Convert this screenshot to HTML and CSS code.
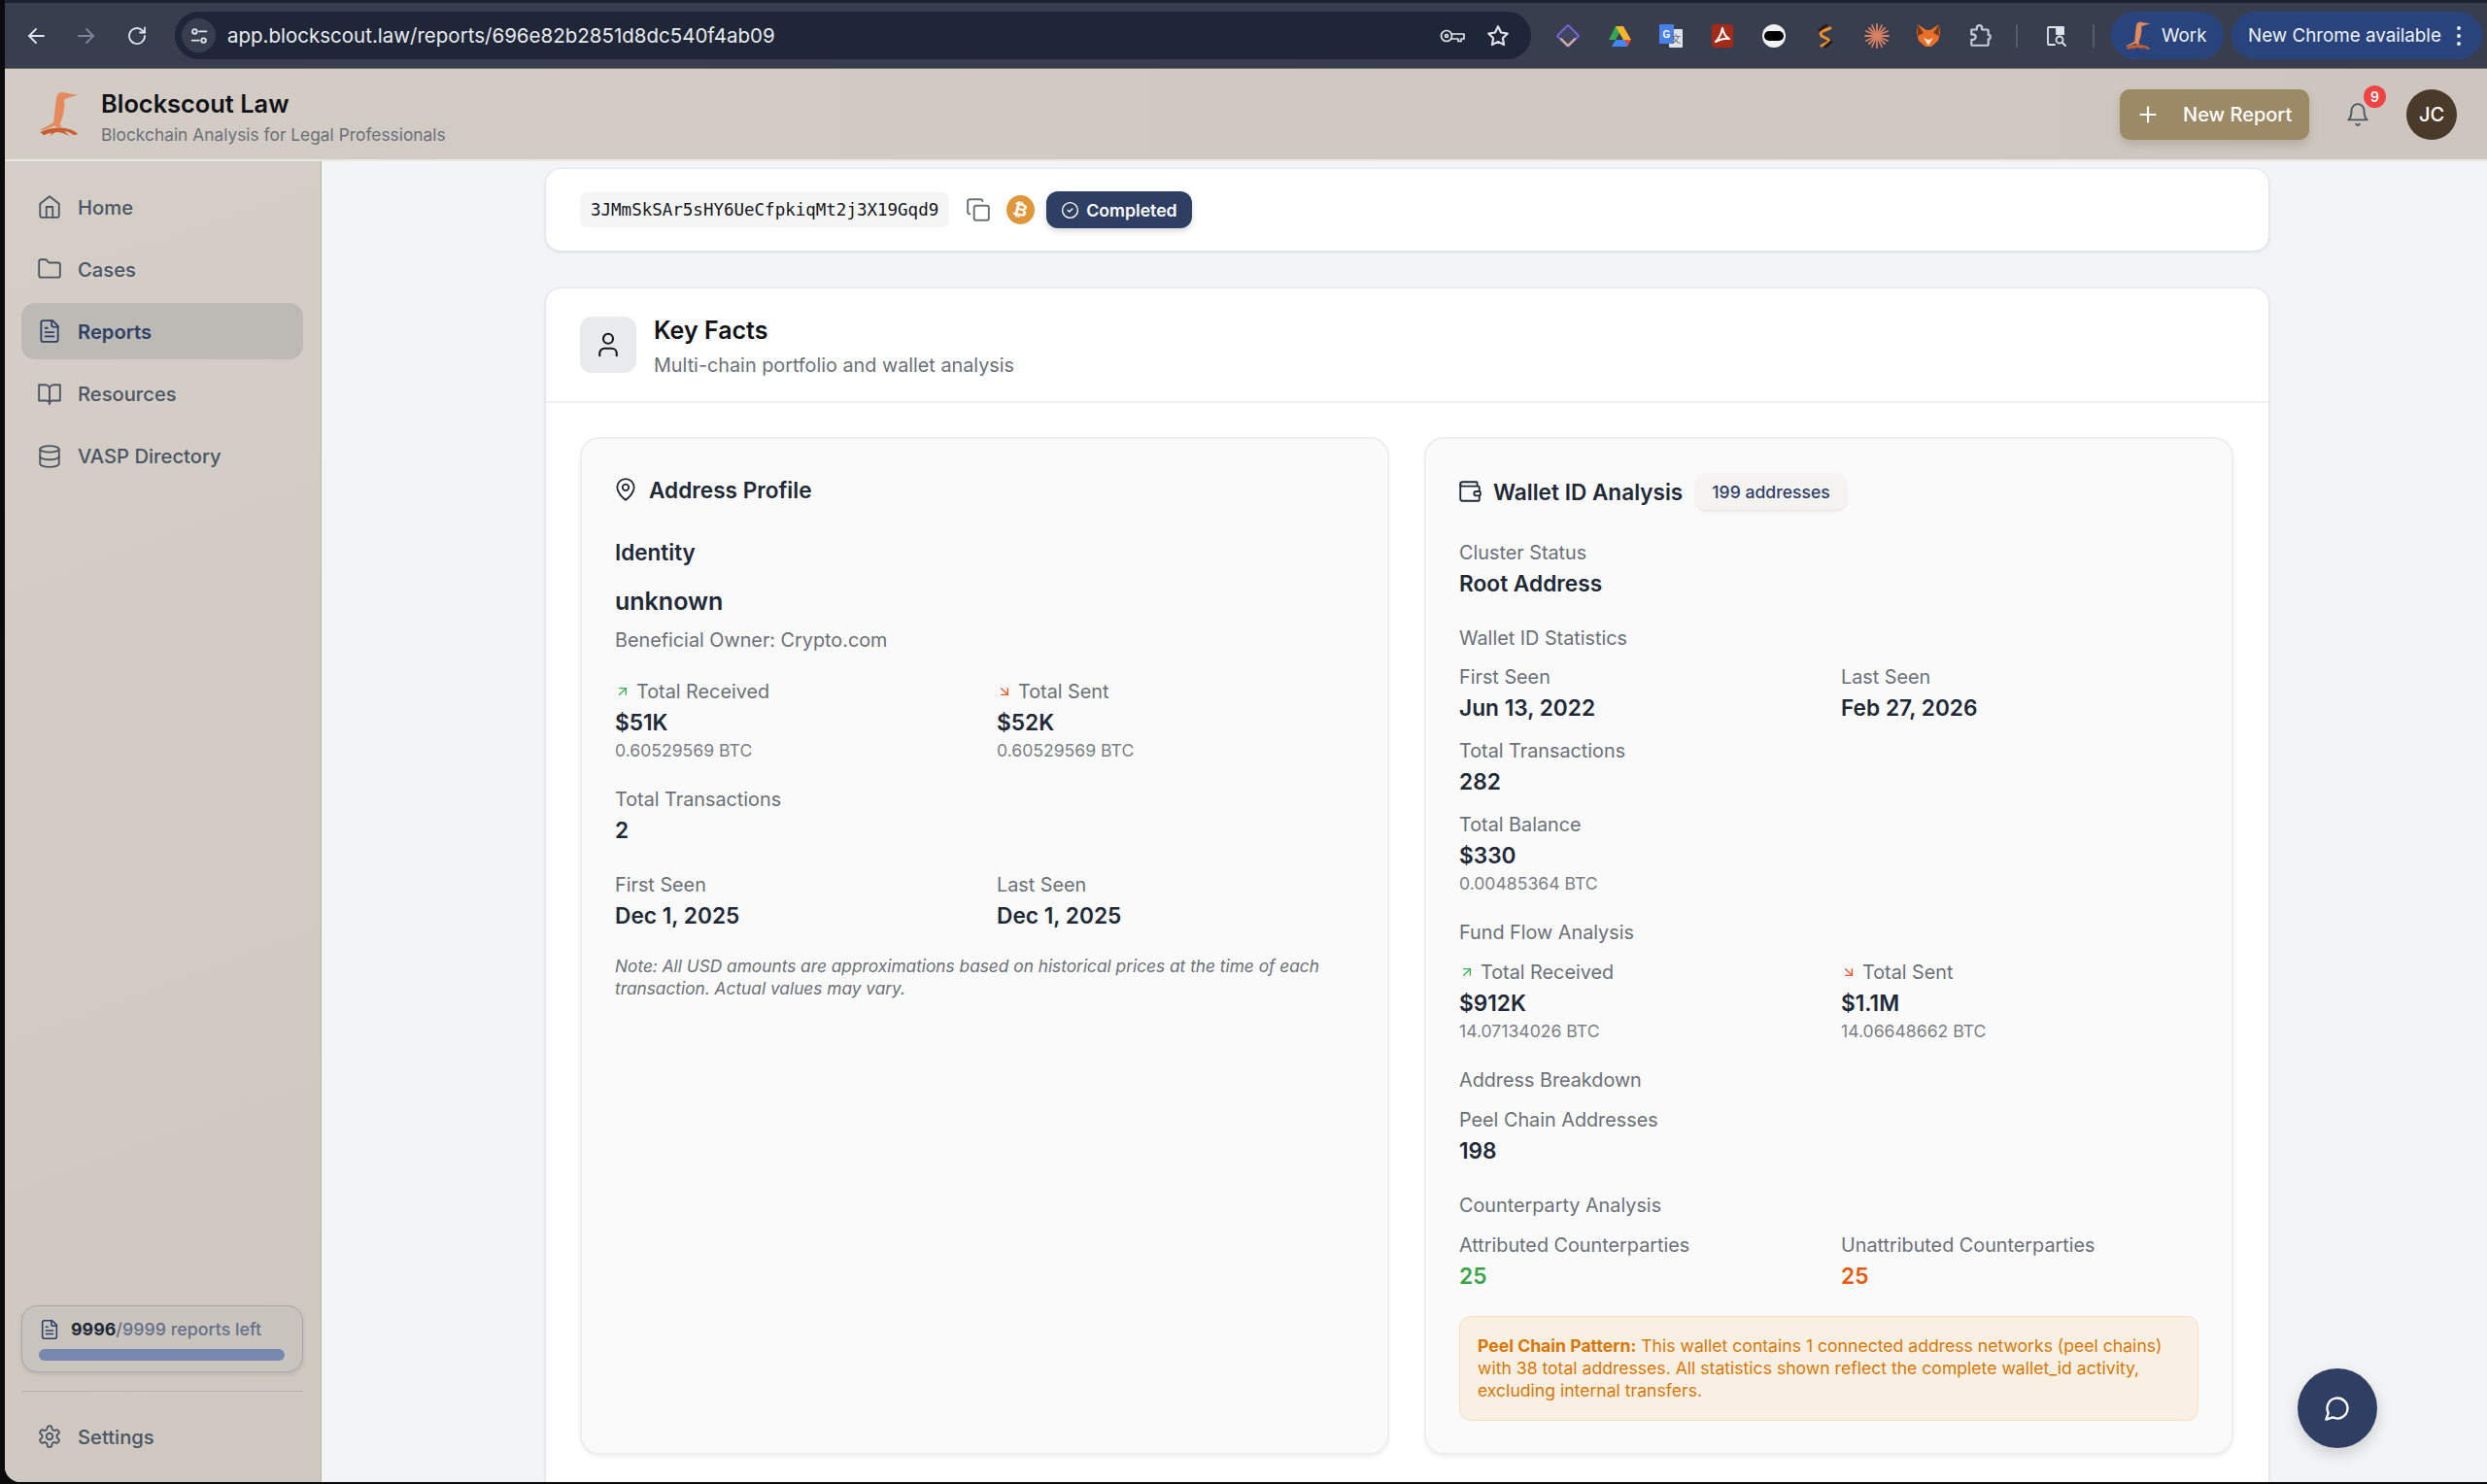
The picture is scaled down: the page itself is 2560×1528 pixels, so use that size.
FILE: index.html
```html
<!DOCTYPE html>
<html lang="en">
<head>
    <meta charset="UTF-8">
    <meta name="viewport" content="width=device-width, initial-scale=1.0">
    <title>Blockscout Law</title>
    <link rel="stylesheet" href="styles.css">
</head>
<body>
    <svg class="sprite" xmlns="http://www.w3.org/2000/svg">
        <symbol id="i-home" viewBox="0 0 24 24"><path d="m3 9 9-7 9 7v11a2 2 0 0 1-2 2H5a2 2 0 0 1-2-2z"/><path d="M9 22V12h6v10"/></symbol>
        <symbol id="i-folder" viewBox="0 0 24 24"><path d="M20 20a2 2 0 0 0 2-2V8a2 2 0 0 0-2-2h-7.9a2 2 0 0 1-1.69-.9L9.6 3.9A2 2 0 0 0 7.93 3H4a2 2 0 0 0-2 2v13a2 2 0 0 0 2 2Z"/></symbol>
        <symbol id="i-file" viewBox="0 0 24 24"><path d="M15 2H6a2 2 0 0 0-2 2v16a2 2 0 0 0 2 2h12a2 2 0 0 0 2-2V7Z"/><path d="M14 2v4a2 2 0 0 0 2 2h4"/><path d="M10 9H8"/><path d="M16 13H8"/><path d="M16 17H8"/></symbol>
        <symbol id="i-book" viewBox="0 0 24 24"><path d="M2 3h6a4 4 0 0 1 4 4v14a3 3 0 0 0-3-3H2z"/><path d="M22 3h-6a4 4 0 0 0-4 4v14a3 3 0 0 1 3-3h7z"/></symbol>
        <symbol id="i-database" viewBox="0 0 24 24"><ellipse cx="12" cy="5" rx="9" ry="3"/><path d="M3 5v14a9 3 0 0 0 18 0V5"/><path d="M3 12a9 3 0 0 0 18 0"/></symbol>
        <symbol id="i-settings" viewBox="0 0 24 24"><path d="M12.22 2h-.44a2 2 0 0 0-2 2v.18a2 2 0 0 1-1 1.73l-.43.25a2 2 0 0 1-2 0l-.15-.08a2 2 0 0 0-2.73.73l-.22.38a2 2 0 0 0 .73 2.73l.15.1a2 2 0 0 1 1 1.72v.51a2 2 0 0 1-1 1.74l-.15.09a2 2 0 0 0-.73 2.73l.22.38a2 2 0 0 0 2.73.73l.15-.08a2 2 0 0 1 2 0l.43.25a2 2 0 0 1 1 1.73V20a2 2 0 0 0 2 2h.44a2 2 0 0 0 2-2v-.18a2 2 0 0 1 1-1.73l.43-.25a2 2 0 0 1 2 0l.15.08a2 2 0 0 0 2.73-.73l.22-.39a2 2 0 0 0-.73-2.73l-.15-.08a2 2 0 0 1-1-1.74v-.5a2 2 0 0 1 1-1.74l.15-.09a2 2 0 0 0 .73-2.73l-.22-.38a2 2 0 0 0-2.73-.73l-.15.08a2 2 0 0 1-2 0l-.43-.25a2 2 0 0 1-1-1.73V4a2 2 0 0 0-2-2z"/><circle cx="12" cy="12" r="3"/></symbol>
        <symbol id="i-user" viewBox="0 0 24 24"><path d="M19 21v-2a4 4 0 0 0-4-4H9a4 4 0 0 0-4 4v2"/><circle cx="12" cy="7" r="4"/></symbol>
        <symbol id="i-pin" viewBox="0 0 24 24"><path d="M20 10c0 6-8 12-8 12s-8-6-8-12a8 8 0 0 1 16 0Z"/><circle cx="12" cy="10" r="3"/></symbol>
        <symbol id="i-wallet" viewBox="0 0 24 24"><path d="M19 7V4a1 1 0 0 0-1-1H5a2 2 0 0 0 0 4h15a1 1 0 0 1 1 1v4h-3a2 2 0 0 0 0 4h3a1 1 0 0 0 1-1v-2a1 1 0 0 0-1-1"/><path d="M3 5v14a2 2 0 0 0 2 2h15a1 1 0 0 0 1-1v-4"/></symbol>
        <symbol id="i-copy" viewBox="0 0 24 24"><rect x="8" y="8" width="14" height="14" rx="2"/><path d="M4 16c-1.1 0-2-.9-2-2V4c0-1.1.9-2 2-2h10c1.1 0 2 .9 2 2"/></symbol>
        <symbol id="i-check" viewBox="0 0 24 24"><circle cx="12" cy="12" r="10"/><path d="m9 12 2 2 4-4"/></symbol>
        <symbol id="i-bell" viewBox="0 0 24 24"><path d="M6 8a6 6 0 0 1 12 0c0 7 3 9 3 9H3s3-2 3-9"/><path d="M10.3 21a1.94 1.94 0 0 0 3.4 0"/></symbol>
        <symbol id="i-chat" viewBox="0 0 24 24"><path d="M7.9 20A9 9 0 1 0 4 16.1L2 22Z"/></symbol>
        <symbol id="i-plus" viewBox="0 0 24 24"><path d="M5 12h14"/><path d="M12 5v14"/></symbol>
        <symbol id="i-up" viewBox="0 0 24 24"><path d="M7 7h10v10"/><path d="M7 17 17 7"/></symbol>
        <symbol id="i-down" viewBox="0 0 24 24"><path d="m7 7 10 10"/><path d="M17 7v10H7"/></symbol>
        <symbol id="i-back" viewBox="0 0 24 24"><path d="M20 12H5"/><path d="m12 5-7 7 7 7"/></symbol>
        <symbol id="i-forward" viewBox="0 0 24 24"><path d="M4 12h15"/><path d="m12 5 7 7-7 7"/></symbol>
        <symbol id="i-reload" viewBox="0 0 24 24"><path d="M20 12a8 8 0 1 1-2.4-5.7L20 8.5"/><path d="M20 3.5v5h-5"/></symbol>
        <symbol id="i-star" viewBox="0 0 24 24"><path d="m12 3 2.8 5.8 6.200.9-4.500 4.400 1.100 6.300-5.600-3-5.600 3 1.100-6.300L3 9.700l6.200-.9z"/></symbol>
        <symbol id="i-key" viewBox="0 0 28 24"><circle cx="8" cy="12" r="5.500"/><circle cx="8" cy="12" r="1.500"/><path d="M13.500 10H26v5h-3v2.500h-3V15h-6.500"/></symbol>
        <symbol id="i-tune" viewBox="0 0 24 24"><circle cx="7" cy="7" r="2.500"/><path d="M12 7h8"/><circle cx="17" cy="17" r="2.500"/><path d="M4 17h8"/></symbol>
        <symbol id="i-puzzle" viewBox="0 0 24 24"><path d="M4 6h5V4.500a2.500 2.500 0 0 1 5 0V6h5a1 1 0 0 1 1 1v4h1a2.500 2.500 0 0 1 0 4h-1v5a1 1 0 0 1-1 1H5a1 1 0 0 1-1-1v-4.500h1.500a2.500 2.500 0 0 0 0-5H4z"/></symbol>
        <symbol id="i-sidesearch" viewBox="0 0 24 24"><path d="M11 21H5a1 1 0 0 1-1-1V4a1 1 0 0 1 1-1h14a1 1 0 0 1 1 1v6"/><path d="M13 3h7v7h-7z" fill="currentColor"/><circle cx="16" cy="16" r="3.500"/><path d="m19 19 3 3"/></symbol>
        <symbol id="i-meerkat" viewBox="55 55 130 140">
            <path fill="#e58a5e" d="M178 66 150 62 128 58Q114 60 112 72 108 95 105 125L103 150Q84 163 62 172L66 175Q88 170 106 160L112 166 128 164 122 156Q134 130 136 100L135 80 150 74Z"/>
            <path fill="#c65f32" d="M62 180Q90 167 125 167 160 170 178 186L165 190Q150 178 135 178 145 184 150 192 130 180 110 180L90 192 98 182Q85 182 72 190Z"/>
        </symbol>
    </svg>

    <div class="window">
        <div class="tab-strip"></div>

        <div class="toolbar">
            <svg class="tb-icon"><use href="#i-back"/></svg>
            <svg class="tb-icon tb-dim"><use href="#i-forward"/></svg>
            <svg class="tb-icon"><use href="#i-reload"/></svg>
            <div class="omnibox">
                <span class="tune"><svg><use href="#i-tune"/></svg></span>
                <span class="url">app.blockscout.law/reports/696e82b2851d8dc540f4ab09</span>
                <svg class="key"><use href="#i-key"/></svg>
                <svg class="star"><use href="#i-star"/></svg>
            </div>
            <div class="extensions">
                <svg class="ext" viewBox="0 0 26 26"><rect x="5" y="5" width="16" height="16" rx="2" transform="rotate(45 13 13)" fill="#3f4560" stroke="#7a68d8" stroke-width="2"/><path d="M6 16l7 7 7-7" fill="none" stroke="#d8b58c" stroke-width="2"/></svg>
                <svg class="ext" viewBox="0 0 26 26"><path d="M9 3h8l-8 14H2z" fill="#34a853"/><path d="M9 3h8l8 14h-8z" fill="#f3b52c"/><path d="M5 24l4-7h16l-4 7z" fill="#4285f4"/><path d="M21 24l4-7h-6z" fill="#ea4335"/></svg>
                <svg class="ext" viewBox="0 0 26 26"><rect x="11" y="6" width="14" height="19" rx="1" fill="#dfe2e6"/><rect x="1" y="1" width="15" height="20" rx="1" fill="#4a80e8"/><text x="8.500" y="15" class="ext-g">G</text><text x="18" y="20" class="ext-zh">文</text></svg>
                <svg class="ext" viewBox="0 0 26 26"><rect x="2" y="1" width="22" height="24" rx="3" fill="#a32a17"/><path d="M13 5c-1 5-2 9-7 14 4-2 9-4 14-3-4-2-6-6-7-11z" fill="none" stroke="#fff" stroke-width="2"/></svg>
                <svg class="ext" viewBox="0 0 26 26"><circle cx="13" cy="13" r="12" fill="#f1f1f1"/><rect x="3" y="8" width="20" height="10" rx="5" fill="#000"/></svg>
                <svg class="ext" viewBox="0 0 26 26"><path d="M18 5l-8 3c-3 2-2 5 1 6l4 2c2 1 2 3 0 4l-6 3" fill="none" stroke="#ef8f2b" stroke-width="3"/><path d="M14 2 7 7M13 24l6-5" stroke="#2a1c14" stroke-width="3"/></svg>
                <svg class="ext" viewBox="0 0 26 26"><g stroke="#d98263" stroke-width="1.800"><path d="M13 1v24"/><path d="M1 13h24"/><path d="M5 5l16 16"/><path d="M21 5 5 21"/><path d="M8 2l10 22"/><path d="M18 2 8 24"/><path d="M2 8l22 10"/><path d="M24 8 2 18"/></g></svg>
                <svg class="ext" viewBox="0 0 26 26"><path d="M2 1l9 6h4l9-6 1 9-2 8-7 6h-6l-7-6-2-8z" fill="#e8702a"/><path d="M2 1l6 9-6 3zM24 1l-6 9 6 3z" fill="#7a3a1c"/><path d="M8 15l5 8 5-8-5 2z" fill="#f4ddc9"/></svg>
                <svg class="ext tb-puzzle"><use href="#i-puzzle"/></svg>
            </div>
            <span class="tb-sep"></span>
            <svg class="tb-icon side-search"><use href="#i-sidesearch"/></svg>
            <span class="tb-sep"></span>
            <div class="profile-pill">
                <svg class="profile-logo"><use href="#i-meerkat"/></svg>
                <span>Work</span>
            </div>
            <div class="update-pill">
                <span>New Chrome available</span>
                <span class="kebab"><i></i><i></i><i></i></span>
            </div>
        </div>

        <header class="app-header">
            <svg class="logo"><use href="#i-meerkat"/></svg>
            <div class="brand">
                <div class="brand-name">Blockscout Law</div>
                <div class="brand-sub">Blockchain Analysis for Legal Professionals</div>
            </div>
            <div class="header-actions">
                <button class="btn-new"><svg><use href="#i-plus"/></svg>New Report</button>
                <div class="bell">
                    <svg><use href="#i-bell"/></svg>
                    <span class="bell-badge">9</span>
                </div>
                <div class="avatar">JC</div>
            </div>
        </header>

        <div class="app-body">
            <aside class="sidebar">
                <nav class="nav">
                    <a class="nav-item"><svg><use href="#i-home"/></svg>Home</a>
                    <a class="nav-item"><svg><use href="#i-folder"/></svg>Cases</a>
                    <a class="nav-item active"><svg><use href="#i-file"/></svg>Reports</a>
                    <a class="nav-item"><svg><use href="#i-book"/></svg>Resources</a>
                    <a class="nav-item"><svg><use href="#i-database"/></svg>VASP Directory</a>
                </nav>
                <div class="quota">
                    <div class="quota-text"><svg><use href="#i-file"/></svg><span><b>9996</b>/9999 reports left</span></div>
                    <div class="quota-bar"></div>
                </div>
                <div class="side-divider"></div>
                <a class="nav-item"><svg><use href="#i-settings"/></svg>Settings</a>
            </aside>

            <main class="main">
                <section class="card address-card">
                    <code class="address">3JMmSkSAr5sHY6UeCfpkiqMt2j3X19Gqd9</code>
                    <svg class="copy"><use href="#i-copy"/></svg>
                    <span class="coin"><span class="coin-glyph">₿</span></span>
                    <span class="status"><svg><use href="#i-check"/></svg>Completed</span>
                </section>

                <section class="card facts-card">
                    <div class="facts-head">
                        <span class="facts-icon"><svg><use href="#i-user"/></svg></span>
                        <div>
                            <h2 class="facts-title">Key Facts</h2>
                            <p class="facts-sub">Multi-chain portfolio and wallet analysis</p>
                        </div>
                    </div>

                    <div class="facts-body">
                        <div class="panel">
                            <h3 class="panel-title"><svg><use href="#i-pin"/></svg>Address Profile</h3>
                            <div class="identity-label">Identity</div>
                            <div class="identity-name">unknown</div>
                            <div class="label owner">Beneficial Owner: Crypto.com</div>

                            <div class="two-col gap-section">
                                <div>
                                    <div class="label"><svg class="arrow up"><use href="#i-up"/></svg>Total Received</div>
                                    <div class="value">$51K</div>
                                    <div class="sub">0.60529569 BTC</div>
                                </div>
                                <div>
                                    <div class="label"><svg class="arrow down"><use href="#i-down"/></svg>Total Sent</div>
                                    <div class="value">$52K</div>
                                    <div class="sub">0.60529569 BTC</div>
                                </div>
                            </div>
                            <div class="gap-section">
                                <div class="label">Total Transactions</div>
                                <div class="value">2</div>
                            </div>
                            <div class="two-col gap-dates">
                                <div>
                                    <div class="label">First Seen</div>
                                    <div class="value">Dec 1, 2025</div>
                                </div>
                                <div>
                                    <div class="label">Last Seen</div>
                                    <div class="value">Dec 1, 2025</div>
                                </div>
                            </div>
                            <p class="note">Note: All USD amounts are approximations based on historical prices at the time of each transaction. Actual values may vary.</p>
                        </div>

                        <div class="panel">
                            <h3 class="panel-title wallet-title"><svg><use href="#i-wallet"/></svg>Wallet ID Analysis<span class="count">199 addresses</span></h3>

                            <div class="gap-cluster">
                                <div class="label">Cluster Status</div>
                                <div class="value">Root Address</div>
                            </div>

                            <div class="label gap-head">Wallet ID Statistics</div>
                            <div class="two-col gap-item">
                                <div>
                                    <div class="label">First Seen</div>
                                    <div class="value">Jun 13, 2022</div>
                                </div>
                                <div>
                                    <div class="label">Last Seen</div>
                                    <div class="value">Feb 27, 2026</div>
                                </div>
                            </div>
                            <div class="gap-item">
                                <div class="label">Total Transactions</div>
                                <div class="value">282</div>
                            </div>
                            <div class="gap-item">
                                <div class="label">Total Balance</div>
                                <div class="value">$330</div>
                                <div class="sub">0.00485364 BTC</div>
                            </div>

                            <div class="label gap-section">Fund Flow Analysis</div>
                            <div class="two-col gap-wide">
                                <div>
                                    <div class="label"><svg class="arrow up"><use href="#i-up"/></svg>Total Received</div>
                                    <div class="value">$912K</div>
                                    <div class="sub">14.07134026 BTC</div>
                                </div>
                                <div>
                                    <div class="label"><svg class="arrow down"><use href="#i-down"/></svg>Total Sent</div>
                                    <div class="value">$1.1M</div>
                                    <div class="sub">14.06648662 BTC</div>
                                </div>
                            </div>

                            <div class="label gap-section">Address Breakdown</div>
                            <div class="gap-wide">
                                <div class="label">Peel Chain Addresses</div>
                                <div class="value">198</div>
                            </div>

                            <div class="label gap-head">Counterparty Analysis</div>
                            <div class="two-col gap-wide">
                                <div>
                                    <div class="label">Attributed Counterparties</div>
                                    <div class="value green">25</div>
                                </div>
                                <div>
                                    <div class="label">Unattributed Counterparties</div>
                                    <div class="value orange">25</div>
                                </div>
                            </div>

                            <div class="alert"><b>Peel Chain Pattern:</b> This wallet contains 1 connected address networks (peel chains) with 38 total addresses. All statistics shown reflect the complete wallet_id activity, excluding internal transfers.</div>
                        </div>
                    </div>
                </section>
            </main>
        </div>

        <button class="chat-fab"><svg><use href="#i-chat"/></svg></button>
    </div>
</body>
</html>
```

FILE: styles.css
```css
* {
    box-sizing: border-box;
}

html, body {
    margin: 0;
    height: 100%;
    overflow: hidden;
    background-color: #0b0b0c;
    font-family: Inter, "Liberation Sans", sans-serif;
}

svg {
    fill: none;
    stroke: currentColor;
    stroke-width: 2;
    stroke-linecap: round;
    stroke-linejoin: round;
    flex-shrink: 0;
}

.sprite {
    display: none;
}

.window {
    position: relative;
    margin-left: 5px;
    height: 1526px;
    display: flex;
    flex-direction: column;
    overflow: hidden;
    border-bottom-left-radius: 16px;
    background-color: #f3f4f6;
}

/* browser chrome */
.tab-strip {
    height: 3px;
    flex-shrink: 0;
    background-color: #1c2333;
}

.toolbar {
    height: 68px;
    flex-shrink: 0;
    padding-left: 20px;
    display: flex;
    align-items: center;
    background-color: #383e4e;
    border-bottom: 1px solid #77736f;
    color: #dfe3ea;
}

.tb-icon {
    width: 24px;
    height: 24px;
    margin-right: 28px;
    stroke-width: 1.8;
}

.tb-dim {
    color: #7e8596;
}

.omnibox {
    width: 1396px;
    height: 49px;
    flex-shrink: 0;
    margin-left: -1px;
    padding-left: 7px;
    display: flex;
    align-items: center;
    border-radius: 25px;
    background-color: #1f2637;
}

.tune {
    width: 35px;
    height: 35px;
    display: flex;
    align-items: center;
    justify-content: center;
    border-radius: 50%;
    background-color: #383e4e;
}

.tune svg {
    width: 22px;
    height: 22px;
}

.url {
    flex: 1;
    margin-left: 12px;
    font-size: 20.5px;
    color: #e8eaef;
}

.key {
    width: 28px;
    height: 24px;
    stroke-width: 1.7;
}

.star {
    width: 26px;
    height: 26px;
    margin: 0 21px 0 20px;
}

.extensions {
    margin-left: 25px;
    display: flex;
    align-items: center;
    gap: 27px;
}

.ext {
    width: 26px;
    height: 26px;
    stroke: none;
}

.ext-g {
    font-family: "Liberation Sans", sans-serif;
    font-size: 10px;
    font-weight: 700;
    fill: #fff;
    text-anchor: middle;
}

.ext-zh {
    font-family: "Noto Sans CJK SC", sans-serif;
    font-size: 10px;
    fill: #666;
    text-anchor: middle;
}

.tb-puzzle {
    stroke: #c5cbda;
    stroke-width: 2;
}

.tb-sep {
    width: 2px;
    height: 24px;
    margin-left: 24px;
    flex-shrink: 0;
    background-color: #555c6c;
}

.side-search {
    margin: 0 2px 0 27px;
}

.profile-pill,
.update-pill {
    height: 49px;
    flex-shrink: 0;
    display: flex;
    align-items: center;
    border-radius: 25px;
    background-color: #29447c;
    color: #eef1f7;
    font-size: 18.8px;
}

.profile-pill {
    width: 116px;
    margin-left: 17px;
    padding-left: 14px;
    gap: 10px;
}

.profile-logo {
    width: 28px;
    height: 32px;
    stroke: none;
}

.update-pill {
    width: 258px;
    margin-left: 8px;
    padding-left: 17px;
}

.kebab {
    margin-left: 16px;
    display: flex;
    flex-direction: column;
    gap: 4px;
}

.kebab i {
    width: 4px;
    height: 4px;
    border-radius: 50%;
    background-color: #eef1f7;
}

/* app header */
.app-header {
    height: 95px;
    flex-shrink: 0;
    padding-left: 34px;
    display: flex;
    align-items: flex-start;
    background: linear-gradient(90deg, #d3ccc5, #cec6be);
    border-bottom: 2px solid #e9e7e4;
}

.logo {
    width: 44px;
    height: 47px;
    margin-top: 23px;
    stroke: none;
}

.brand {
    margin-left: 21px;
    padding-top: 18px;
}

.brand-name {
    font-size: 25.4px;
    line-height: 36px;
    font-weight: 600;
    color: #111318;
}

.brand-sub {
    font-size: 17.35px;
    line-height: 28px;
    color: #6b7078;
}

.header-actions {
    margin-left: auto;
    padding: 21px 31px 0 0;
    display: flex;
    align-items: flex-start;
}

.btn-new {
    width: 195px;
    height: 52px;
    padding: 0 0 0 16px;
    display: flex;
    align-items: center;
    gap: 23px;
    border: none;
    border-radius: 10px;
    background-color: #9c8966;
    color: #fff;
    font-family: inherit;
    font-size: 20px;
    font-weight: 500;
    box-shadow: 0 5px 10px rgba(90, 80, 60, 0.22);
}

.btn-new svg {
    width: 26px;
    height: 26px;
}

.bell {
    position: relative;
    width: 26px;
    height: 52px;
    margin: 0 37px;
    display: flex;
    align-items: center;
    color: #4b5563;
}

.bell svg {
    width: 26px;
    height: 26px;
    stroke-width: 1.7;
}

.bell-badge {
    position: absolute;
    top: -4px;
    right: -16px;
    width: 23px;
    height: 23px;
    display: flex;
    align-items: center;
    justify-content: center;
    border-radius: 50%;
    background-color: #ef4444;
    color: #fff;
    font-size: 14px;
    font-weight: 600;
}

.avatar {
    width: 52px;
    height: 52px;
    display: flex;
    align-items: center;
    justify-content: center;
    border-radius: 50%;
    background-color: #4a3a2a;
    color: #fff;
    font-size: 20px;
    font-weight: 500;
}

/* sidebar */
.app-body {
    flex: 1;
    min-height: 0;
    display: flex;
}

.sidebar {
    width: 326px;
    flex-shrink: 0;
    padding: 18px 18px 18px 17px;
    display: flex;
    flex-direction: column;
    background: linear-gradient(160deg, #d4cec7, #cfc8c1);
    border-right: 1px solid #b9b5ae;
}

.nav {
    flex: 1;
    display: flex;
    flex-direction: column;
    gap: 6.2px;
}

.nav-item {
    height: 58px;
    flex-shrink: 0;
    padding-left: 16px;
    display: flex;
    align-items: center;
    gap: 16px;
    border-radius: 14px;
    color: #4b5563;
    font-size: 20.2px;
    font-weight: 500;
}

.nav-item svg {
    width: 26px;
    height: 26px;
    stroke-width: 1.7;
}

.nav-item.active {
    background-color: #bdb9b4;
    color: #2f4068;
    font-weight: 600;
}

.quota {
    height: 69px;
    padding: 12px 18px 0 17px;
    border: 1px solid #a8a7a6;
    border-radius: 16px;
    background-color: #c9c4bd;
    box-shadow: 0 2px 4px rgba(70, 70, 80, 0.16);
}

.quota-text {
    display: flex;
    align-items: center;
    gap: 11px;
    font-size: 17.85px;
    line-height: 24px;
    font-weight: 500;
    color: #667089;
}

.quota-text svg {
    width: 22px;
    height: 22px;
    stroke-width: 1.7;
    color: #2f4068;
}

.quota-text b {
    font-weight: 700;
    color: #1f2937;
}

.quota-bar {
    height: 12px;
    margin-top: 8px;
    border-radius: 6px;
    background-color: #7688ad;
}

.side-divider {
    height: 1px;
    margin: 19px 0 17px;
    flex-shrink: 0;
    background-color: #b8b3ab;
}

/* main content */
.main {
    flex: 1;
    min-width: 0;
    padding: 7px 0 0 230px;
    overflow: hidden;
}

.card {
    width: 1775px;
    border: 1px solid #e5e7eb;
    border-radius: 16px;
    background-color: #fff;
    box-shadow: 0 1px 3px rgba(0, 0, 0, 0.1);
}

.address-card {
    height: 86px;
    padding-left: 35px;
    display: flex;
    align-items: center;
}

.address {
    height: 36px;
    padding: 0 11px;
    display: flex;
    align-items: center;
    border-radius: 7px;
    background-color: #f5f5f5;
    color: #16181d;
    font-family: "DejaVu Sans Mono", monospace;
    font-size: 17.5px;
}

.copy {
    width: 26px;
    height: 26px;
    margin-left: 17px;
    stroke-width: 1.8;
    color: #6b7078;
}

.coin {
    width: 29px;
    height: 30px;
    margin-left: 16px;
    display: flex;
    align-items: center;
    justify-content: center;
    border-radius: 50%;
    background-color: #e0963a;
    color: #fff;
    font-family: "DejaVu Sans", sans-serif;
    font-size: 18px;
    font-weight: 700;
}

.coin-glyph {
    transform: rotate(14deg);
}

.status {
    width: 150px;
    height: 38px;
    margin-left: 12px;
    padding-left: 15px;
    display: flex;
    align-items: center;
    gap: 7px;
    border-radius: 12px;
    background-color: #2f3f63;
    color: #fff;
    font-size: 17.7px;
    font-weight: 600;
    box-shadow: 0 3px 6px rgba(0, 0, 0, 0.16);
}

.status svg {
    width: 19px;
    height: 19px;
    stroke-width: 1.7;
}

.facts-card {
    height: 1300px;
    margin-top: 37px;
}

.facts-head {
    height: 118px;
    padding: 29px 0 0 35px;
    display: flex;
    gap: 18px;
    border-bottom: 2px solid #f0f1f3;
}

.facts-icon {
    width: 58px;
    height: 58px;
    display: flex;
    align-items: center;
    justify-content: center;
    border-radius: 12px;
    background-color: #e9eaec;
    color: #16181d;
}

.facts-icon svg {
    width: 30px;
    height: 30px;
    stroke-width: 1.7;
}

.facts-title {
    margin: -2px 0 0;
    font-size: 25px;
    line-height: 32px;
    font-weight: 600;
    color: #111318;
}

.facts-sub {
    margin: 6px 0 0;
    font-size: 19.8px;
    line-height: 28px;
    color: #6b7078;
}

.facts-body {
    padding: 35px 35px 0;
    display: grid;
    grid-template-columns: 833px 833px;
    gap: 36px;
}

.panel {
    height: 1048px;
    padding: 35px 34px;
    border: 2px solid #eceef0;
    border-radius: 20px;
    background-color: #fafafa;
    box-shadow: 0 2px 4px rgba(0, 0, 0, 0.06);
}

.panel-title {
    margin: 0;
    height: 34px;
    display: flex;
    align-items: center;
    gap: 11px;
    font-size: 22.6px;
    font-weight: 600;
    color: #1f2937;
}

.panel-title svg {
    width: 26px;
    height: 26px;
    margin-left: -2px;
    stroke-width: 1.7;
}

.wallet-title {
    height: 38px;
}

.count {
    margin-left: 2px;
    height: 38px;
    padding: 0 17px;
    display: flex;
    align-items: center;
    border-radius: 12px;
    background-color: #f5f3f0;
    color: #2f4068;
    font-size: 17.6px;
    font-weight: 500;
    box-shadow: 0 2px 3px rgba(0, 0, 0, 0.08);
}

.identity-label {
    margin-top: 34px;
    font-size: 22.5px;
    line-height: 28px;
    font-weight: 600;
    color: #1f2937;
}

.identity-name {
    margin-top: 18px;
    font-size: 25px;
    line-height: 36px;
    font-weight: 600;
    color: #1f2937;
}

.owner {
    margin-top: 8px;
}

.label {
    display: flex;
    align-items: center;
    font-size: 19.8px;
    line-height: 28px;
    color: #6b7078;
}

.value {
    font-size: 22.7px;
    line-height: 36px;
    font-weight: 600;
    color: #1f2937;
}

.value.green {
    color: #3aa34a;
}

.value.orange {
    color: #ea580c;
}

.sub {
    font-size: 17.6px;
    line-height: 22px;
    color: #7a7f86;
}

.arrow {
    width: 16px;
    height: 16px;
    margin-right: 6px;
}

.arrow.up {
    color: #3fae55;
}

.arrow.down {
    color: #e8552a;
}

.two-col {
    display: grid;
    grid-template-columns: 1fr 1fr;
    column-gap: 25px;
}

.gap-section {
    margin-top: 25px;
}

.gap-dates {
    margin-top: 24px;
}

.gap-cluster {
    margin-top: 30px;
}

.gap-head {
    margin-top: 24px;
}

.gap-item {
    margin-top: 12px;
}

.gap-wide {
    margin-top: 13px;
}

.note {
    margin: 22px 0 0;
    font-size: 17.3px;
    line-height: 23px;
    font-style: italic;
    color: #6b7078;
}

.alert {
    margin-top: 23px;
    padding: 18px 18px 0;
    height: 108px;
    border: 1px solid #f7dfb9;
    border-radius: 12px;
    background-color: #f9f0e3;
    color: #d97706;
    font-size: 17.6px;
    line-height: 23px;
}

.alert b {
    font-weight: 700;
}

.chat-fab {
    position: absolute;
    left: 2360px;
    top: 1409px;
    width: 82px;
    height: 82px;
    display: flex;
    align-items: center;
    justify-content: center;
    border: none;
    border-radius: 50%;
    background-color: #2f3f63;
    color: #fff;
    box-shadow: 0 6px 16px rgba(0, 0, 0, 0.16);
}

.chat-fab svg {
    width: 28px;
    height: 28px;
}
```
